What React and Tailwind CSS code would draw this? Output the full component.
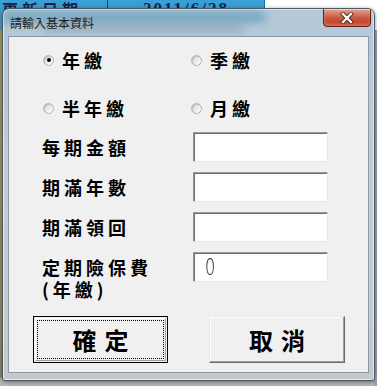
export default function App() {
  const cjk = "font-['Noto_Sans_CJK_TC','Noto_Sans_CJK_SC',sans-serif]";
  const inputCls =
    "w-[135px] h-[30px] bg-white border border-t-[#9a9a9a] border-l-[#9a9a9a] border-r-[#e6e6e6] border-b-[#e6e6e6] shadow-[inset_1px_1px_0_#6f6f6f]";
  const Radio = ({ checked, label }) => (
    <div className="flex items-center h-[24px]">
      <div className="w-[11px] h-[11px] rounded-full border border-[#b4b4b4] bg-gradient-to-br from-[#d8d8d8] to-white flex items-center justify-center shadow-[inset_1px_1px_1px_rgba(0,0,0,0.15)]">
        {checked && <div className="w-[4px] h-[4px] rounded-full bg-black" />}
      </div>
      <span className={`ml-[8px] text-[18px] font-bold tracking-[4px] leading-none text-black ${cjk}`}>{label}</span>
    </div>
  );
  return (
    <div className="relative w-[377px] h-[386px] overflow-hidden bg-[#dcdcdc]">
      {/* Excel sheet behind the dialog */}
      <div className="absolute left-0 top-0 w-[377px] h-[30px] flex">
        <div className="w-[108px] h-full bg-[#3a9fd6] border-r border-[#1d3f6a] overflow-hidden">
          <span className={`block -mt-[3px] pl-[2px] text-[16px] font-bold tracking-[4px] text-[#14244a] ${cjk}`}>更新日期</span>
        </div>
        <div className="w-[157px] h-full bg-[#3a9fd6] border-r border-[#1a6fa8] flex justify-center">
          <span className="block -mt-[4px] text-[17px] font-bold tracking-[2px] text-[#14244a] font-['Liberation_Serif',serif]">2011/6/28</span>
        </div>
        <div className="flex-1 h-full bg-white" />
      </div>
      <div className="absolute left-0 top-[30px] w-[3px] h-[356px] bg-gradient-to-b from-[#a9a35a] to-[#8c8a6a]" />
      <div className="absolute left-0 top-[378px] w-[377px] h-[8px] bg-[#b8b8b8]" />
      <div className="absolute right-0 top-[30px] w-[3px] h-[356px] bg-[#9aa7b6]" />

      {/* Dialog window */}
      <div className="absolute left-[2px] top-[8px] w-[373px] h-[373px] flex flex-col rounded-t-[7px] rounded-b-[3px] border border-[#4e5a66] bg-gradient-to-b from-[#b3c8d8] via-[#c3ccd4] to-[#c6c9cc] shadow-[0_1px_4px_rgba(0,0,0,0.45),inset_0_0_0_1px_rgba(255,255,255,0.55)] overflow-hidden">
        {/* blurred content behind glass */}
        <div className="absolute left-[0px] top-[2px] w-[262px] h-[12px] bg-[#4f94b8]/60 blur-[4px]" />
        <div className="absolute left-[40px] top-[14px] w-[200px] h-[10px] bg-[#7b8b98]/40 blur-[5px]" />
        {/* title bar */}
        <div className="relative h-[27px] flex items-center pl-[7px] pt-[1px]">
          <span className={`text-[12px] leading-none text-[#1b1b1b] ${cjk}`}>請輸入基本資料</span>
          <div className="absolute right-[3px] top-[-1px] w-[48px] h-[19px] rounded-b-[4px] border border-[#5f2219] bg-gradient-to-b from-[#e3a595] via-[#c95a43] to-[#b8351c] shadow-[inset_0_1px_0_rgba(255,255,255,0.5),inset_0_-2px_3px_rgba(255,170,120,0.5)] flex items-center justify-center">
            <svg width="14" height="12" viewBox="0 0 14 12">
              <path d="M3 2 L11 10 M11 2 L3 10" stroke="#4a1a12" strokeWidth="4" strokeLinecap="square" />
              <path d="M3 2 L11 10 M11 2 L3 10" stroke="#ffffff" strokeWidth="2.4" strokeLinecap="square" />
            </svg>
          </div>
        </div>
        {/* client area */}
        <div className="relative mx-[5px] h-[337px] bg-[#f0f0f0] border border-[#8c98a4] flex flex-col pl-[33px] pt-[11px]">
          <div className="flex flex-col gap-[24px] pl-[1px]">
            <div className="grid grid-cols-[148px_1fr]">
              <Radio checked label="年繳" />
              <Radio label="季繳" />
            </div>
            <div className="grid grid-cols-[148px_1fr]">
              <Radio label="半年繳" />
              <Radio label="月繳" />
            </div>
          </div>
          <div className="flex flex-col gap-[10px] mt-[12px]">
            {["每期金額", "期滿年數", "期滿領回"].map((t) => (
              <div key={t} className="flex items-center h-[30px]">
                <div className={`w-[151px] text-[18px] font-bold tracking-[4px] leading-none text-black ${cjk}`}>{t}</div>
                <div className={inputCls} />
              </div>
            ))}
            <div className="flex items-start">
              <div className={`w-[151px] pt-[4px] text-[18px] font-bold tracking-[4px] leading-[22px] text-black ${cjk}`}>
                <div>定期險保費</div>
                <div>(年繳)</div>
              </div>
              <div className={`${inputCls} flex items-center pl-[11px]`}>
                <span className="text-[23px] leading-none text-[#111] font-['DejaVu_Sans',sans-serif] font-light scale-x-[0.7] origin-left">0</span>
              </div>
            </div>
          </div>
          <div className="flex mt-[16px] -ml-[9px] gap-[41px]">
            <button className="w-[135px] h-[47px] border border-black bg-[#f0f0f0] p-[1px]">
              <div className="w-full h-full border border-t-white border-l-white border-r-[#a0a0a0] border-b-[#a0a0a0] p-[1px]">
                <div className="w-full h-full border border-dotted border-black flex items-center justify-center">
                  <span className={`text-[24px] font-bold tracking-[8px] pl-[8px] leading-none text-black ${cjk}`}>確定</span>
                </div>
              </div>
            </button>
            <button className="w-[136px] h-[47px] border border-t-[#e8e8e8] border-l-[#e8e8e8] border-r-[#696969] border-b-[#696969] bg-[#f0f0f0] shadow-[inset_-1px_-1px_0_#a0a0a0,inset_1px_1px_0_#ffffff] flex items-center justify-center">
              <span className={`text-[24px] font-bold tracking-[8px] pl-[8px] leading-none text-black ${cjk}`}>取消</span>
            </button>
          </div>
        </div>
      </div>
    </div>
  );
}
